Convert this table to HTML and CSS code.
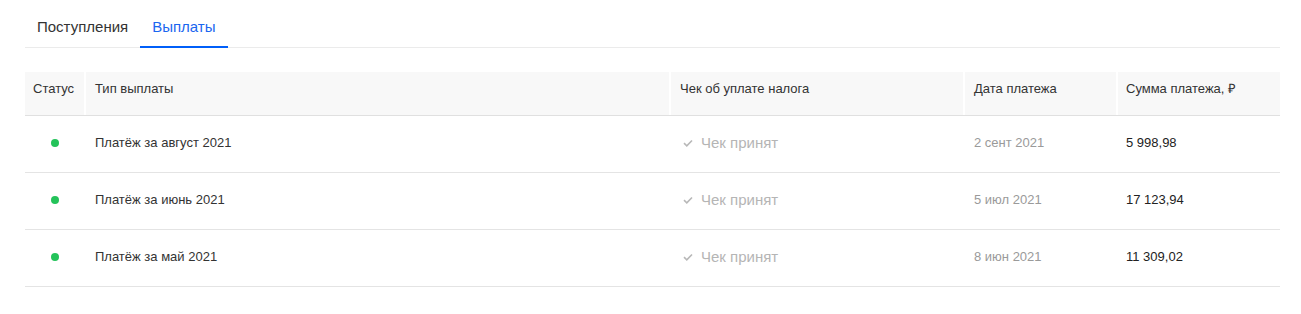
FILE: index.html
```html
<!DOCTYPE html>
<html lang="ru">
<head>
<meta charset="utf-8">
<title>Выплаты</title>
<link rel="stylesheet" href="styles.css">
</head>
<body>
<div class="page">
  <nav class="tabs">
    <div class="tab">Поступления</div>
    <div class="tab tab-active">Выплаты</div>
  </nav>
  <div class="table">
    <div class="row head">
      <div class="cell">Статус</div>
      <div class="cell">Тип выплаты</div>
      <div class="cell">Чек об уплате налога</div>
      <div class="cell">Дата платежа</div>
      <div class="cell">Сумма платежа, ₽</div>
    </div>
    <div class="row">
      <div class="cell status"><span class="dot"></span></div>
      <div class="cell">Платёж за август 2021</div>
      <div class="cell check"><svg class="tick" width="10" height="8" viewBox="0 0 10 8"><path d="M1 4.2 L3.8 6.8 L9 1.5" fill="none" stroke="#b8b8b8" stroke-width="1.6"/></svg>Чек принят</div>
      <div class="cell date">2 сент 2021</div>
      <div class="cell sum">5 998,98</div>
    </div>
    <div class="row">
      <div class="cell status"><span class="dot"></span></div>
      <div class="cell">Платёж за июнь 2021</div>
      <div class="cell check"><svg class="tick" width="10" height="8" viewBox="0 0 10 8"><path d="M1 4.2 L3.8 6.8 L9 1.5" fill="none" stroke="#b8b8b8" stroke-width="1.6"/></svg>Чек принят</div>
      <div class="cell date">5 июл 2021</div>
      <div class="cell sum">17 123,94</div>
    </div>
    <div class="row">
      <div class="cell status"><span class="dot"></span></div>
      <div class="cell">Платёж за май 2021</div>
      <div class="cell check"><svg class="tick" width="10" height="8" viewBox="0 0 10 8"><path d="M1 4.2 L3.8 6.8 L9 1.5" fill="none" stroke="#b8b8b8" stroke-width="1.6"/></svg>Чек принят</div>
      <div class="cell date">8 июн 2021</div>
      <div class="cell sum">11 309,02</div>
    </div>
  </div>
</div>
</body>
</html>
```

FILE: styles.css
```css
html, body {
  margin: 0;
  padding: 0;
  background: #fff;
}
body {
  font-family: "Liberation Sans", Arial, sans-serif;
  color: #333;
}
.page {
  width: 1255px;
  padding-left: 25px;
}
.tabs {
  display: flex;
  height: 47px;
  border-bottom: 1px solid #ebebeb;
}
.tab {
  font-size: 15px;
  line-height: 17px;
  padding: 18px 12px 11px;
  border-bottom: 2px solid transparent;
  color: #333;
  height: 17px;
}
.tab-active {
  color: #1a66f0;
  border-bottom-color: #005ff9;
}
.table {
  margin-top: 24px;
}
.row {
  display: grid;
  grid-template-columns: 59px 583px 292px 151px 162px;
  column-gap: 2px;
  height: 56px;
  border-bottom: 1px solid #e4e4e4;
  font-size: 13px;
  line-height: 16px;
}
.row .cell {
  display: flex;
  align-items: center;
  padding-left: 9px;
  padding-bottom: 3px;
}
.row.head {
  height: 43px;
  border-bottom: 1px solid #e0e0e0;
}
.row.head .cell {
  background: #f8f8f8;
  align-items: flex-start;
  padding-top: 9px;
  padding-bottom: 0;
  color: #333;
}
.row.head .cell:first-child,
.row.head .cell:last-child {
  padding-left: 8px;
}
.row .cell.status {
  justify-content: center;
  padding-left: 0;
}
.dot {
  width: 8px;
  height: 8px;
  border-radius: 50%;
  background: #24c35a;
}
.check {
  font-size: 15px;
  color: #b5b5b5;
}
.tick {
  margin-left: 3px;
  margin-right: 8px;
}
.date {
  color: #9a9a9a;
}
.row .cell.sum {
  color: #222;
  padding-left: 8px;
}
```
